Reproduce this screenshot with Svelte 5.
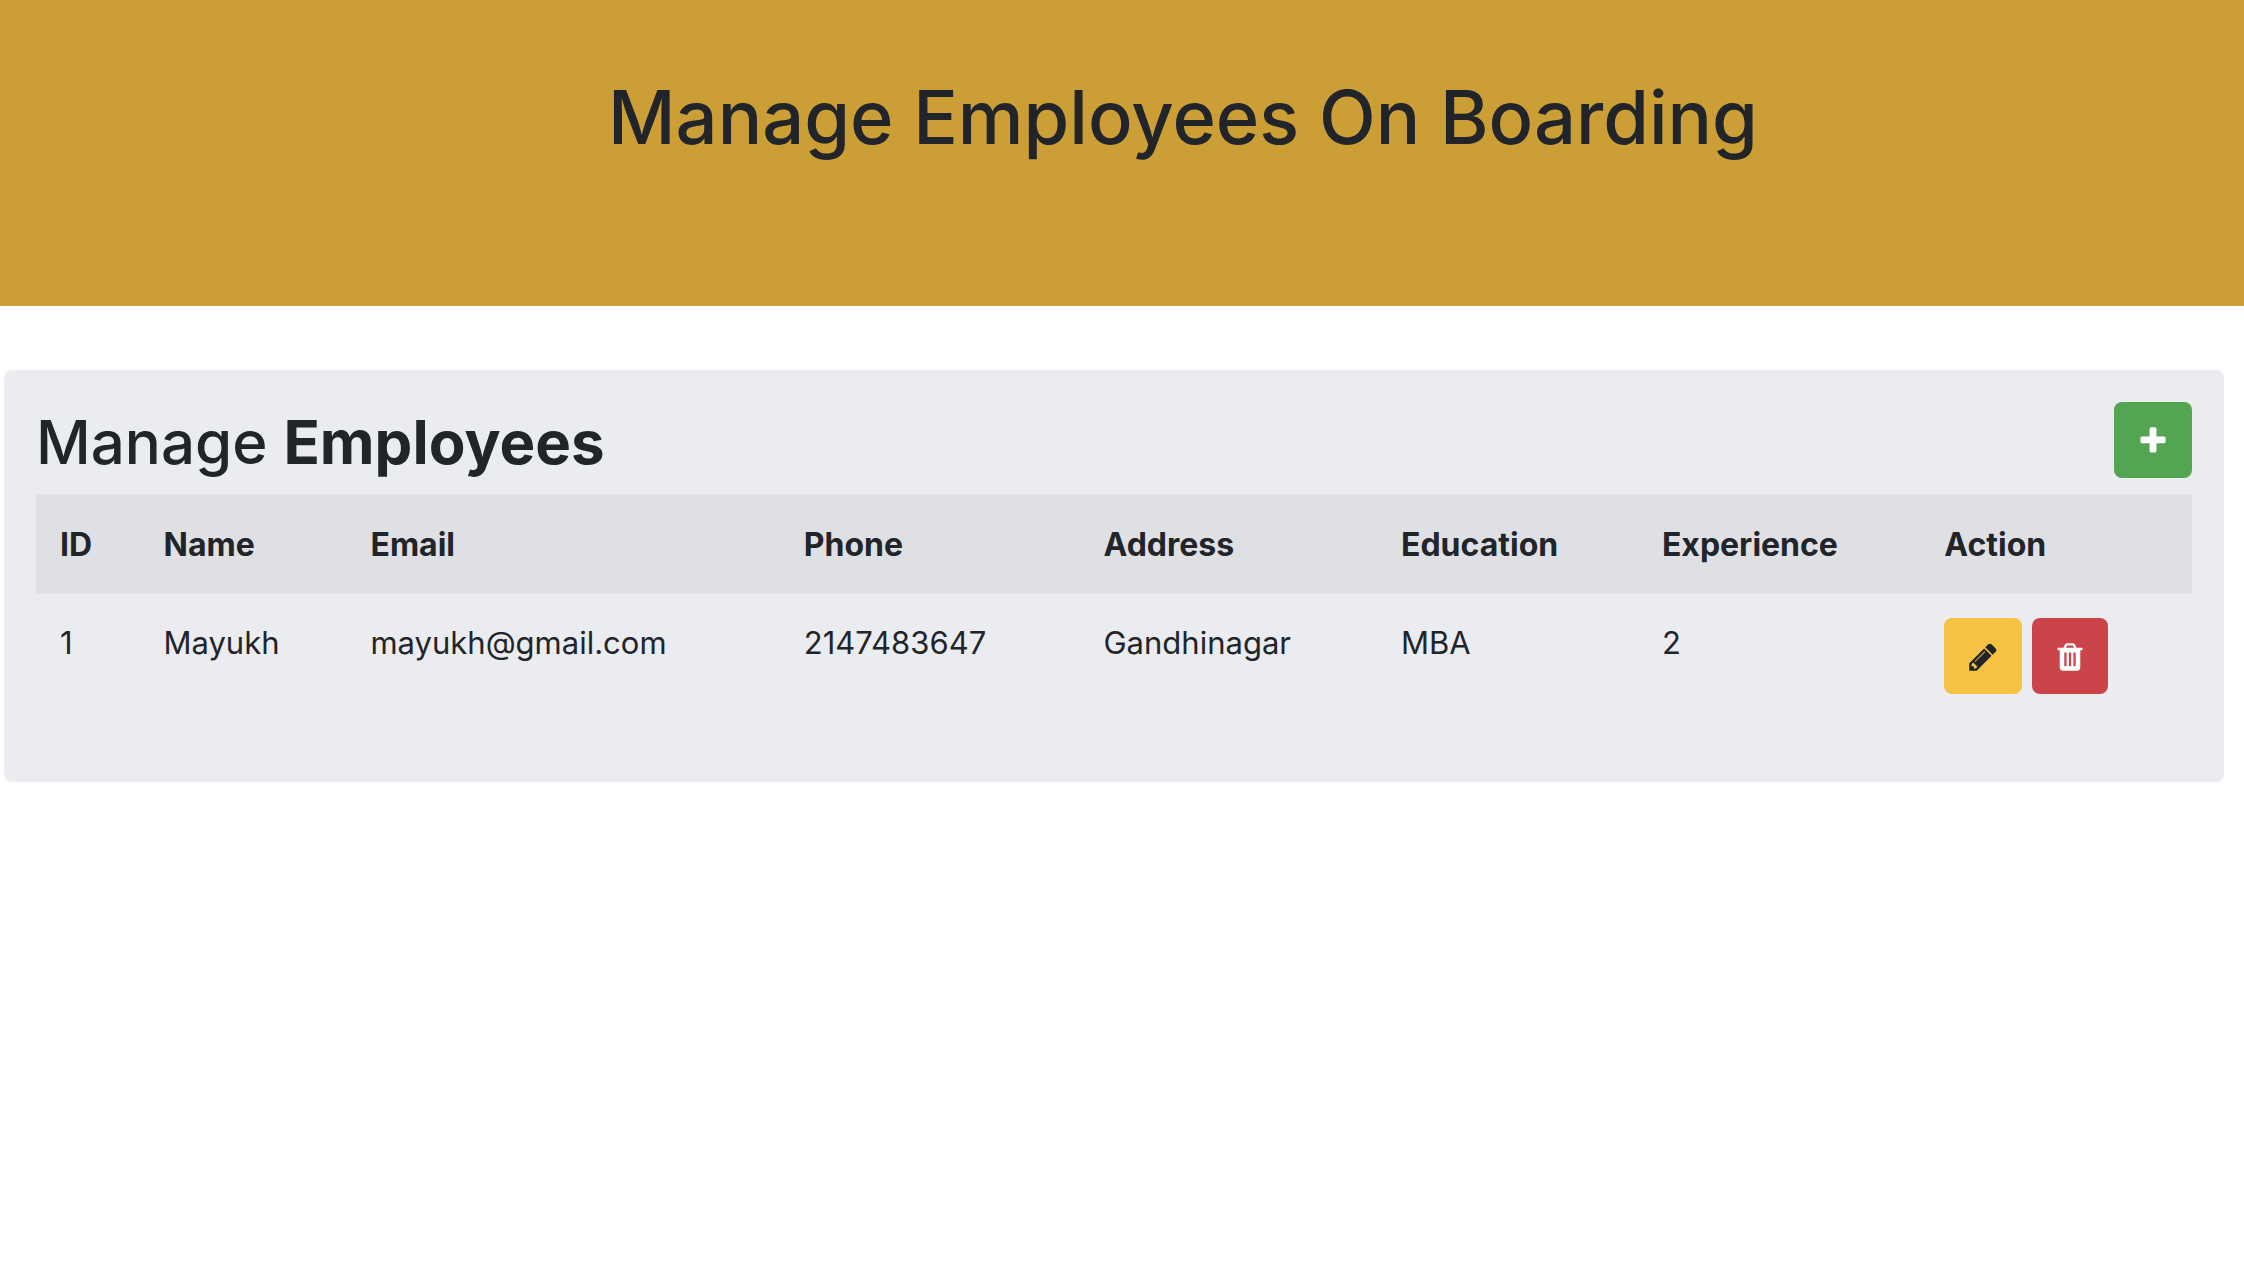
<script>
  const employees = [
    {
      id: 1,
      name: 'Mayukh',
      email: 'mayukh@gmail.com',
      phone: '2147483647',
      address: 'Gandhinagar',
      education: 'MBA',
      experience: 2
    }
  ];
</script>

<header class="banner">
  <h1>Manage Employees On Boarding</h1>
</header>

<main class="card">
  <div class="card-head">
    <h2>Manage <b>Employees</b></h2>
    <button class="btn add" type="button" aria-label="Add employee">
      <svg viewBox="0 0 1792 1792" aria-hidden="true"><path d="M1600 736v192q0 40-28 68t-68 28h-416v416q0 40-28 68t-68 28h-192q-40 0-68-28t-28-68v-416h-416q-40 0-68-28t-28-68v-192q0-40 28-68t68-28h416v-416q0-40 28-68t68-28h192q40 0 68 28t28 68v416h416q40 0 68 28t28 68z" /></svg>
    </button>
  </div>

  <table>
    <colgroup>
      <col class="c-id" /><col class="c-name" /><col class="c-email" /><col class="c-phone" />
      <col class="c-address" /><col class="c-education" /><col class="c-experience" /><col class="c-action" />
    </colgroup>
    <thead>
      <tr>
        <th scope="col">ID</th>
        <th scope="col">Name</th>
        <th scope="col">Email</th>
        <th scope="col">Phone</th>
        <th scope="col">Address</th>
        <th scope="col">Education</th>
        <th scope="col">Experience</th>
        <th scope="col">Action</th>
      </tr>
    </thead>
    <tbody>
      {#each employees as e (e.id)}
        <tr>
          <td>{e.id}</td>
          <td>{e.name}</td>
          <td>{e.email}</td>
          <td>{e.phone}</td>
          <td>{e.address}</td>
          <td>{e.education}</td>
          <td>{e.experience}</td>
          <td>
            <div class="actions">
              <button class="btn edit" type="button" aria-label="Edit {e.name}">
                <svg viewBox="0 0 1792 1792" aria-hidden="true"><path d="M491 1536l91-91-235-235-91 91v107h128v128h107zm523-928q0-22-22-22-10 0-17 7l-542 542q-7 7-7 17 0 22 22 22 10 0 17-7l542-542q7-7 7-17zm-54-192l416 416-832 832h-416v-416zm683 96q0 53-37 90l-166 166-416-416 166-165q36-38 90-38 53 0 91 38l235 234q37 39 37 91z" /></svg>
              </button>
              <button class="btn delete" type="button" aria-label="Delete {e.name}">
                <svg viewBox="0 0 1792 1792" aria-hidden="true"><path d="M704 1376v-704q0-14-9-23t-23-9h-64q-14 0-23 9t-9 23v704q0 14 9 23t23 9h64q14 0 23-9t9-23zm256 0v-704q0-14-9-23t-23-9h-64q-14 0-23 9t-9 23v704q0 14 9 23t23 9h64q14 0 23-9t9-23zm256 0v-704q0-14-9-23t-23-9h-64q-14 0-23 9t-9 23v704q0 14 9 23t23 9h64q14 0 23-9t9-23zm-544-992h448l-48-117q-7-9-17-11h-317q-10 2-17 11zm928 32v64q0 14-9 23t-23 9h-96v948q0 83-47 143.5t-113 60.5h-832q-66 0-113-58.5t-47-141.5v-952h-96q-14 0-23-9t-9-23v-64q0-14 9-23t23-9h309l70-167q15-37 54-63t79-26h320q40 0 79 26t54 63l70 167h309q14 0 23 9t9 23z" /></svg>
              </button>
            </div>
          </td>
        </tr>
      {/each}
    </tbody>
  </table>
</main>

<style>
  :global(body) {
    margin: 0;
    background: #fff;
    color: #212529;
    font: 400 31px/50px Inter, 'Liberation Sans', sans-serif;
  }

  .banner {
    padding: 69px 0 141px 122px;
    background: #cb9f35;
    text-align: center;
  }

  h1 {
    margin: 0;
    font-size: 74px;
    font-weight: 500;
    line-height: 96px;
  }

  .card {
    margin: 64px 20px 0 4px;
    padding: 32px 32px 64px;
    border-radius: 8px;
    background: #eaecef;
  }

  .card-head {
    display: flex;
    justify-content: space-between;
    align-items: flex-start;
    margin-bottom: 12px;
  }

  h2 {
    margin: 0;
    font-size: 60px;
    font-weight: 500;
    line-height: 80px;
  }

  b {
    font-weight: 700;
  }

  table {
    width: 100%;
    table-layout: fixed;
    border-collapse: separate;
    border-spacing: 0;
  }

  .c-id { width: 4.8%; }
  .c-name { width: 9.6%; }
  .c-email { width: 20.1%; }
  .c-phone { width: 13.9%; }
  .c-address { width: 13.8%; }
  .c-education { width: 12.1%; }
  .c-experience { width: 13.1%; }
  .c-action { width: 12.6%; }

  th,
  td {
    padding: 24px;
    text-align: left;
    vertical-align: top;
    white-space: nowrap;
  }

  th {
    padding-bottom: 22px;
    border: solid #dfe1e5;
    border-width: 2px 0;
    background: #dee0e4;
    font-size: 32px;
    font-weight: 700;
  }

  .actions {
    display: flex;
    gap: 10px;
  }

  .btn {
    display: flex;
    align-items: center;
    justify-content: center;
    box-sizing: border-box;
    width: 78px;
    height: 76px;
    padding: 2px 0 0;
    border: 0;
    border-radius: 8px;
    color: #fff;
    cursor: pointer;
  }

  .btn svg {
    width: 32px;
    height: 32px;
    fill: currentColor;
  }

  .add {
    background: #53a551;
  }

  .edit {
    background: #f5c244;
    color: #212529;
  }

  .delete {
    width: 76px;
    background: #cb444a;
  }
</style>
